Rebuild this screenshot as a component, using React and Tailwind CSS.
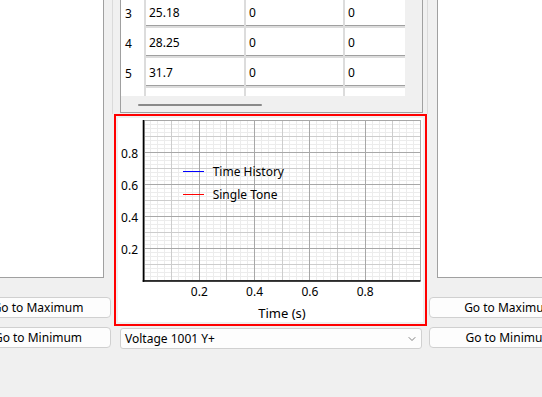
import { ChevronDown } from 'lucide-react'

const rows = [
  { n: 3, a: '25.18', b: '0', c: '0' },
  { n: 4, a: '28.25', b: '0', c: '0' },
  { n: 5, a: '31.7', b: '0', c: '0' },
  { n: '', a: '', b: '', c: '' },
]

function Cell({ w, children }) {
  return (
    <div className="flex flex-col" style={{ width: w }}>
      <div className="h-[28px] bg-white border-b border-[#a0a0a0] flex items-center pl-[3px] pt-[2px]">{children}</div>
      <div className="h-[2px] bg-[#dcdcdc]" />
    </div>
  )
}

function Table() {
  return (
    <div className="h-[113px] w-[303px] border-x border-b border-[#a0a0a0] bg-[#f0f0f0] flex flex-col">
      <div className="h-[96px] overflow-hidden">
        <div className="-mt-[2px] w-[284px]">
          {rows.map((r, i) => (
            <div key={i} className="flex h-[30px]">
              <div className="w-[23px] bg-white flex items-center pl-[4px] pt-[1px]">{r.n}</div>
              <div className="w-[2px] bg-[#dcdcdc]" />
              <Cell w={98}>{r.a}</Cell>
              <div className="w-[2px] bg-[#dcdcdc]" />
              <Cell w={97}>{r.b}</Cell>
              <div className="w-[2px] bg-[#dcdcdc]" />
              <Cell w={60}>{r.c}</Cell>
            </div>
          ))}
        </div>
      </div>
      {/* horizontal scrollbar */}
      <div className="h-[16px] pl-[17px] pt-[8px]">
        <div className="w-[124px] h-[2px] bg-[#8a8a8a] rounded-full" />
      </div>
    </div>
  )
}

function Chart() {
  const x0 = 26, x1 = 302.5, yTop = 2, yBot = 162
  const px = (v) => x0 + (x1 - x0) * v
  const py = (v) => yBot - (yBot - yTop) * v
  const lines = []
  for (let i = 0; i <= 40; i++) {
    const v = i / 40
    const major = i % 8 === 0
    const mid = i % 4 === 0
    const color = major ? '#a8a8a8' : mid ? '#cdcdcd' : '#ececec'
    lines.push({ v, color, order: major ? 2 : mid ? 1 : 0 })
  }
  lines.sort((a, b) => a.order - b.order)
  const ticks = [0.2, 0.4, 0.6, 0.8]

  return (
    <svg width="305" height="204" className="block">
      <g shapeRendering="crispEdges">
        {lines.map((l, i) => (
          <g key={i}>
            <line x1={px(l.v)} x2={px(l.v)} y1={yTop} y2={yBot} stroke={l.color} strokeWidth="1" />
            <line x1={x0} x2={x1} y1={py(l.v)} y2={py(l.v)} stroke={l.color} strokeWidth="1" />
          </g>
        ))}
      </g>
      <line x1={25.5} x2={25.5} y1={yTop} y2={163.8} stroke="#000" strokeWidth="1.6" />
      <line x1={24.7} x2={x1} y1={163} y2={163} stroke="#000" strokeWidth="1.6" />
      {ticks.map((t) => (
        <text key={'y' + t} x={20} y={py(t) + 6.2} textAnchor="end" fontSize="12" fill="#000">{t}</text>
      ))}
      {ticks.map((t) => (
        <text key={'x' + t} x={px(t)} y={178} textAnchor="middle" fontSize="12" fill="#000">{t}</text>
      ))}
      <text x={164} y={199.5} textAnchor="middle" fontSize="13" fill="#000">Time (s)</text>
      <line x1={65} x2={86} y1={53.5} y2={53.5} stroke="#0000ff" strokeWidth="1" shapeRendering="crispEdges" />
      <text x={94.7} y={58} fontSize="12" fill="#000">Time History</text>
      <line x1={65} x2={86} y1={76.5} y2={76.5} stroke="#ff0000" strokeWidth="1" shapeRendering="crispEdges" />
      <text x={94.7} y={80.5} fontSize="12" fill="#000">Single Tone</text>
    </svg>
  )
}

function Button({ children, className = '' }) {
  return (
    <div className={`h-[21px] bg-[#fdfdfd] border border-[#d0d0d0] rounded-[4px] flex items-center justify-center ${className}`}>
      {children}
    </div>
  )
}

export default function App() {
  return (
    <div className="w-[542px] h-[397px] bg-[#f0f0f0] overflow-hidden font-['Noto_Sans',sans-serif] text-[12px] text-black">
      <div className="flex">
        {/* left column */}
        <div className="-ml-[35px] w-[146px] shrink-0 flex flex-col">
          <div className="h-[278px] bg-white border-r border-b border-[#a0a0a0]" style={{ width: 139 }} />
          <Button className="mt-[19px]">Go to Maximum</Button>
          <Button className="mt-[9px]">Go to Minimum</Button>
        </div>

        {/* middle column */}
        <div className="ml-[1px] w-[316px] shrink-0 flex flex-col">
          <div className="h-[114px] border-x border-[#dadada] pl-[7px]">
            <Table />
          </div>
          <div className="ml-[2px] w-[313px] h-[212px] border-2 border-[#ff0000] p-[2px] bg-[#f0f0f0]">
            <div className="bg-white w-full h-full">
              <Chart />
            </div>
          </div>
          <div className="mt-[2px] ml-[8px] w-[302px] h-[21px] bg-[#fdfdfd] border border-[#d0d0d0] rounded-[3px] flex items-center justify-between pl-[4px] pr-[3px]">
            <span>Voltage 1001 Y+</span>
            <ChevronDown className="w-[12px] h-[12px] text-[#555]" strokeWidth={1.5} />
          </div>
        </div>

        {/* right column */}
        <div className="ml-[1px] w-[161px] shrink-0 flex flex-col">
          <div className="ml-[8px] h-[278px] bg-white border-l border-b border-[#a0a0a0]" />
          <Button className="mt-[19px]">Go to Maximum</Button>
          <Button className="mt-[9px]">Go to Minimum</Button>
        </div>
      </div>
    </div>
  )
}
